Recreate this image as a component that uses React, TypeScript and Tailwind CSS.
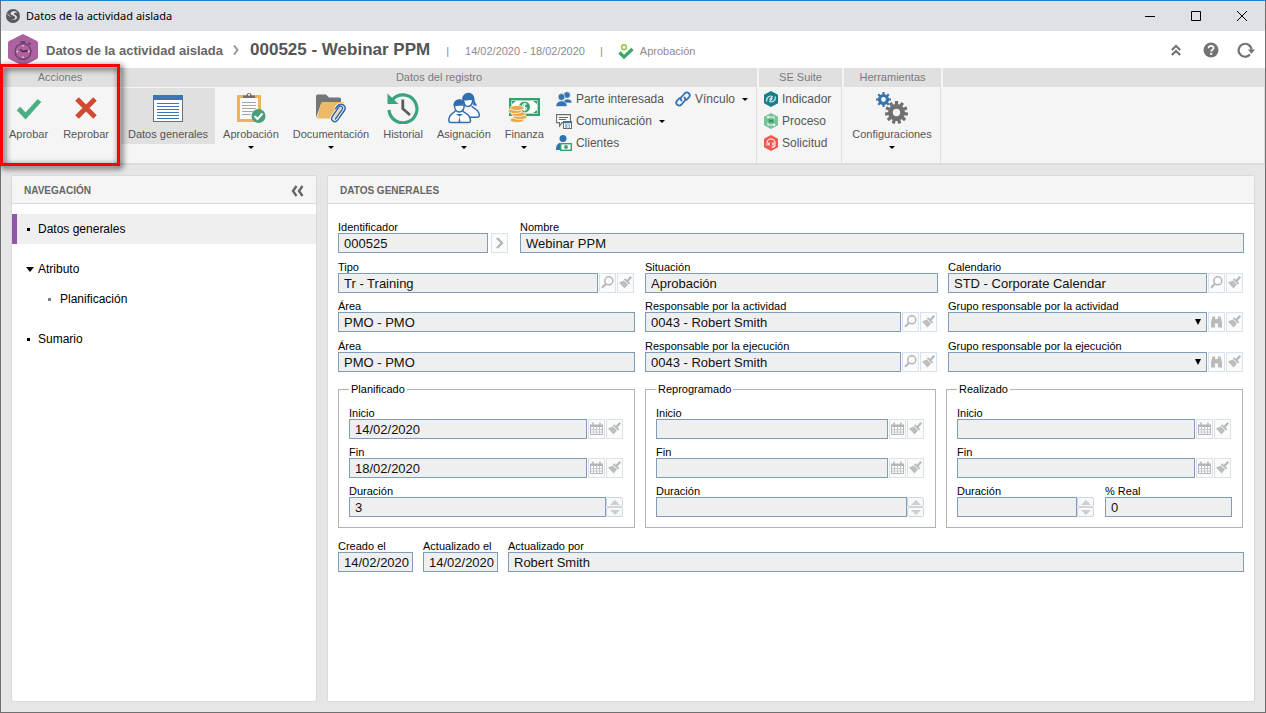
import React from "react";

type IconProps = { className?: string };

/* ---------- window and header icons ---------- */

const AppIcon = () => (
  <svg viewBox="0 0 14 14" className="w-3.5 h-3.5">
    <circle cx="7" cy="7" r="7" fill="#55585c" />
    <path
      d="M11.5 3.2C9.5 1.6 5 2 4.6 4.2c-.4 2.2 4.6 2 4.6 4.2 0 1.6-2 2-3.6 1.6 1.2 1.4 4.6 1 5.4-1.2.6-2.4-3.6-3-3.2-4.2.4-1 2.4-.8 3.7-1.4z"
      fill="#e6e8ea"
    />
    <path d="M1.4 5.2c1.2.2 1.6 1.6 3 2.2" stroke="#e6e8ea" strokeWidth="1" fill="none" />
  </svg>
);

const ActivityLogo = () => (
  <svg viewBox="0 0 30 32" className="w-[30px] h-8">
    <path d="M15 0 L29 7 Q30 7.500 30 9 V23 Q30 24.500 29 25 L15 32 L1 25 Q0 24.500 0 23 V9 Q0 7.500 1 7z" fill="#ab629e" />
    <g fill="none" stroke="#6b3f66" strokeWidth="1.300">
      <circle cx="15" cy="17.500" r="8" />
      <path d="M12.500 7.800h5M15 7.800v2M20.500 8.600l2 2" strokeWidth="1.800" />
    </g>
    <path d="M12 15.500l3 2 4.500-.8" stroke="#3d2440" strokeWidth="1.500" fill="none" />
    <path d="M15 11v1.500M15 22.500V24M8.500 17.500H10M20 17.500h1.500" stroke="#f0dfee" strokeWidth="1.300" />
  </svg>
);

const StatusCheck = () => (
  <svg viewBox="0 0 16 16" className="w-4 h-4">
    <circle cx="6" cy="3.200" r="2.400" fill="none" stroke="#8cc63f" strokeWidth="1.500" />
    <path d="M1.500 8.500l4.500 4.500 8.500-8" fill="none" stroke="#3aa86a" strokeWidth="3.200" />
  </svg>
);

const DoubleUp = () => (
  <svg viewBox="0 0 10 12" className="w-2.5 h-3">
    <path d="M.8 6L5 2l4.200 4M.8 11L5 7l4.200 4" fill="none" stroke="#737373" strokeWidth="2.200" />
  </svg>
);

const HelpIcon = () => (
  <svg viewBox="0 0 16 16" className="w-4 h-4">
    <circle cx="8" cy="8" r="7.500" fill="#737373" />
    <path d="M5.600 6.200c0-3.200 5-3 5-.2 0 1.700-2.400 1.700-2.400 3.400" fill="none" stroke="#fff" strokeWidth="1.800" />
    <rect x="7.200" y="10.800" width="2" height="2" fill="#fff" />
  </svg>
);

const RefreshIcon = () => (
  <svg viewBox="0 0 18 16" className="w-[18px] h-4">
    <path d="M13 12.600A6.500 6.500 0 1 1 14.600 7.500" fill="none" stroke="#737373" strokeWidth="2.200" />
    <path d="M10.800 7.500h7.200l-3.500 4.200z" fill="#737373" />
  </svg>
);

/* ---------- ribbon icons ---------- */

const ApproveIcon = () => (
  <svg viewBox="0 0 32 32" className="w-8 h-8">
    <path d="M5.500 16.500l7 7.500 14-15.500" fill="none" stroke="#4bae84" strokeWidth="4.800" />
  </svg>
);

const RejectIcon = () => (
  <svg viewBox="0 0 32 32" className="w-8 h-8">
    <path d="M7 7l18 18M25 7L7 25" fill="none" stroke="#d04a32" strokeWidth="5" />
  </svg>
);

const GeneralIcon = () => (
  <svg viewBox="0 0 32 32" className="w-8 h-8">
    <rect x="1.500" y="3.500" width="29" height="26" fill="#fff" stroke="#6e6e6e" />
    <rect x="1" y="3" width="30" height="5" fill="#3a76b5" />
    <path d="M5 11.500h22M5 14.500h22M5 17.500h22M5 20.500h22M5 23.500h22M5 26.500h22" stroke="#3a76b5" />
  </svg>
);

const ClipboardIcon = () => (
  <svg viewBox="0 0 32 32" className="w-8 h-8">
    <rect x="3.500" y="4.500" width="21" height="24" fill="#fafafa" stroke="#e8b468" strokeWidth="3" />
    <path d="M8 6V3.500h3.500a2.500 2.500 0 0 1 5 0H20V6z" fill="#6e6e6e" />
    <circle cx="14" cy="2.800" r="1.100" fill="#f5f5f5" />
    <path d="M7 10.500h14M7 13.500h14M7 16.500h14M7 19.500h11M7 22.500h9" stroke="#a6a6a6" />
    <circle cx="23.500" cy="24" r="7" fill="#4a9e7c" />
    <path d="M19.500 24l3 3 5-5.500" stroke="#fff" strokeWidth="2" fill="none" />
  </svg>
);

const FolderIcon = () => (
  <svg viewBox="0 0 32 32" className="w-8 h-8">
    <path d="M1 26V4q0-1.500 1.500-1.500H11l3 3h10.500Q26 5.500 26 7v5H6z" fill="#757575" />
    <path d="M6.500 10H29l-4 16.500H2z" fill="#ecb967" />
    <path
      d="M20 27.500l7.200-10.200a2 2 0 0 0-3.400-2.200L17.300 24.500c-2.400 4 2.700 7 5.300 3.600l6.800-9.600c2.900-4.700-3.700-8.600-6.900-4.500l-2.200 3"
      fill="none"
      stroke="#f5f5f5"
      strokeWidth="3.200"
    />
    <path
      d="M20 27.500l7.200-10.200a2 2 0 0 0-3.400-2.200L17.300 24.500c-2.400 4 2.700 7 5.300 3.600l6.800-9.600c2.900-4.700-3.700-8.600-6.900-4.500l-2.200 3"
      fill="none"
      stroke="#2d63a5"
      strokeWidth="1.400"
    />
  </svg>
);

const HistoryIcon = () => (
  <svg viewBox="0 0 32 32" className="w-8 h-8">
    <path d="M5.500 7.500A14 14 0 1 1 2 18" fill="none" stroke="#3aa57c" strokeWidth="3.200" />
    <path d="M.5 1.500V12h11z" fill="#3aa57c" />
    <path d="M15.800 7.500v9.200L23 23" fill="none" stroke="#5c5c5c" strokeWidth="2.800" />
  </svg>
);

const AssignIcon = () => (
  <svg viewBox="0 0 32 32" className="w-8 h-8">
    <g fill="#fff" stroke="#2f6fb0" strokeWidth="1.500">
      <path d="M15.500 8c0 4 2 6.500 4.500 6.500S24.800 12 24.800 8M24 14c0 3 7 2 7.300 9.500 0 1.800-1.500 1.700-5 1.700h-7" />
      <path d="M.8 28.500C1 20.500 6 22 7.500 18.500h7C16 22 22 20.500 22.500 28.500q0 2-2 2H3q-2 0-2.200-2z" />
      <path d="M6.500 13c0 4 2 7 4.800 7s5-3 5-7z" />
    </g>
    <path d="M14 7.500C14.500-1.500 26.500-1.500 26.500 7.500c0 3 2 4.500 2.500 6-2 .5-3 0-4-1 1-2.500-.5-4.500-2.500-4.500S17 9.500 14 7.500z" fill="#2f6fb0" />
    <path d="M5.500 13.500C5 5 18 5 17.300 13.500 14.500 10.500 9 15 5.500 13.500z" fill="#2f6fb0" />
    <path d="M8 22l3.500 2.500L15 22M11.500 24.500l-1 5.500h2z" fill="#2f6fb0" />
  </svg>
);

const FinanceIcon = () => (
  <svg viewBox="0 0 32 32" className="w-8 h-8">
    <rect x="2.200" y="7.200" width="28.600" height="15.600" fill="#fff" stroke="#33a06f" strokeWidth="2.400" />
    <path d="M4 9h4L4 12zM29 9h-4l4 3zM29 21h-4l4-3z" fill="#33a06f" />
    <circle cx="16.500" cy="15" r="5.500" fill="#33a06f" />
    <path d="M18.500 12.500c-1-1.400-4-1-3.800.9.200 1.700 3.800 1 3.800 3 0 1.800-3 2-4 .5M16.600 10.800v8.400" stroke="#fff" fill="none" strokeWidth="1.100" />
    <g fill="#e9a94b" stroke="#fbf0dc" strokeWidth=".9">
      <ellipse cx="9" cy="28" rx="7" ry="2.500" />
      <ellipse cx="12" cy="25" rx="7" ry="2.500" />
      <ellipse cx="10.500" cy="22" rx="7" ry="2.500" />
      <ellipse cx="7" cy="19" rx="7" ry="2.500" />
      <ellipse cx="9" cy="16" rx="7" ry="2.500" />
    </g>
  </svg>
);

const Gear = ({ cx, cy, r, teeth, color }: { cx: number; cy: number; r: number; teeth: number; color: string }) => (
  <g transform={`translate(${cx} ${cy})`}>
    {Array.from({ length: teeth }, (_, i) => (
      <rect
        key={i}
        x={-r * 0.14}
        y={-r}
        width={r * 0.28}
        height={r * 0.4}
        fill={color}
        transform={`rotate(${(360 / teeth) * i})`}
      />
    ))}
    <circle r={r * 0.53} fill="none" stroke={color} strokeWidth={r * 0.42} />
  </g>
);

const ConfigIcon = () => (
  <svg viewBox="0 0 32 32" className="w-8 h-8">
    <Gear cx={7.500} cy={7.500} r={7.500} teeth={8} color="#3572b0" />
    <Gear cx={20.500} cy={20.500} r={11.500} teeth={11} color="#707070" />
  </svg>
);

const PeopleIcon = () => (
  <svg viewBox="0 0 16 16" className="w-4 h-4">
    <g fill="#3572b0" stroke="#f5f5f5" strokeWidth=".6">
      <circle cx="11" cy="4" r="3.300" />
      <path d="M7 12c0-5 9-5.500 9 0z" />
      <circle cx="5.500" cy="6" r="3.400" />
      <path d="M0 15.500C-.5 8 11.500 8 11 15.500z" />
    </g>
  </svg>
);

const CommentIcon = () => (
  <svg viewBox="0 0 16 16" className="w-4 h-4">
    <path d="M.6 1.600h13.800v8H6L3.500 13V9.600H.6z" fill="#fff" stroke="#6b6b6b" strokeWidth="1.100" />
    <path d="M3 4.500h9M3 6.500h7" stroke="#3572b0" />
    <rect x="7.500" y="8.500" width="8" height="7" fill="#fff" stroke="#6b6b6b" />
    <path d="M8 9.500h7" stroke="#3572b0" strokeWidth="1.500" />
    <path d="M9 12h2.500M12.500 12H14M9 14h2.500M12.500 14H14" stroke="#3572b0" />
  </svg>
);

const ClientsIcon = () => (
  <svg viewBox="0 0 16 16" className="w-4 h-4">
    <circle cx="7" cy="3.500" r="3.500" fill="#3572b0" />
    <path d="M0 15c0-5 2-7 4-7l1.500 0v7z" fill="#3572b0" />
    <rect x="4.700" y="8.700" width="10.600" height="6.600" fill="#fff" stroke="#33a06f" strokeWidth="1.400" />
    <circle cx="10" cy="12" r="1.900" fill="#33a06f" />
  </svg>
);

const LinkIcon = () => (
  <svg viewBox="0 0 16 16" className="w-4 h-4">
    <g fill="none" stroke="#3572b0" strokeWidth="1.800" strokeLinecap="round">
      <path d="M6.500 9.500C5 8 5.500 7 6.500 6l3-3.500c2.800-2.800 7 .8 4.400 3.900l-2.400 2.500" />
      <path d="M9.500 6.500c1.500 1.500 1 2.500 0 3.500l-3 3.500c-2.800 2.800-7-.8-4.400-3.900l2.400-2.500" />
    </g>
  </svg>
);

const Hexagon = ({ color, children }: { color: string; children: React.ReactNode }) => (
  <svg viewBox="0 0 14 16" className="w-3.5 h-4">
    <path d="M7 0l7 3.700v8.600L7 16l-7-3.700V3.700z" fill={color} />
    {children}
  </svg>
);

const IndicatorIcon = () => (
  <Hexagon color="#177f87">
    <path d="M2.800 10.500C1.800 6.500 6 4 8.300 5.500L5.500 8.800M11.200 5.500c1 4-3.200 6.500-5.500 5l2.800-3.300" fill="none" stroke="#cfe8e9" strokeWidth="1.200" />
  </Hexagon>
);

const ProcessIcon = () => (
  <Hexagon color="#74c496">
    <path d="M4 4h6v2.500M4 9.500V12h6" fill="none" stroke="#e9f7ef" strokeWidth="1.100" />
    <path d="M4.500 6.500l5 3M9.500 6.500l-5 3" stroke="#2f8a5a" strokeWidth="1.300" />
    <circle cx="4.200" cy="4.300" r="1.300" fill="#e9f7ef" />
    <circle cx="10" cy="11.800" r="1.300" fill="#e9f7ef" />
  </Hexagon>
);

const RequestIcon = () => (
  <Hexagon color="#f4574f">
    <path d="M3 10.500V8a4 4 0 0 1 8 0v2.500Q10.500 12.500 7.500 12" fill="none" stroke="#fff" strokeWidth="1.100" />
    <path d="M5 7.500v3M9 7.500v3" stroke="#fff" strokeWidth="1.400" />
  </Hexagon>
);

const Caret = ({ className = "" }: IconProps) => (
  <svg viewBox="0 0 6 3" className={`w-1.5 h-[3px] shrink-0 ${className}`}>
    <path d="M0 0h6L3 3z" fill="#000" />
  </svg>
);

/* ---------- field icons ---------- */

const SearchGlyph = () => (
  <svg viewBox="0 0 15 16" className="w-[15px] h-4">
    <circle cx="8.800" cy="5.800" r="4" fill="none" stroke="#b5b5b5" strokeWidth="1.500" />
    <path d="M5.800 9L2 12.800" stroke="#b5b5b5" strokeWidth="2" />
  </svg>
);

const BrushGlyph = () => (
  <svg viewBox="0 0 15 16" className="w-[15px] h-4">
    <path d="M13.200 1.800L9 6.500" stroke="#b9b9b9" strokeWidth="2.400" />
    <path d="M6.500 3.800l5.200 5" stroke="#b9b9b9" strokeWidth="1.800" />
    <path d="M1 7.500l4.800-2L10 9.500l-3.500 4z" fill="#bdbdbd" />
  </svg>
);

const BinocularsGlyph = () => (
  <svg viewBox="0 0 15 16" className="w-[15px] h-4">
    <path d="M3.500 2.500h2.500V5h3V2.500h2.500L13 8v5.500H9V9.500H6v4H2V8z" fill="#bababa" />
  </svg>
);

const CalendarGlyph = () => (
  <svg viewBox="0 0 15 16" className="w-[15px] h-4">
    <path d="M1.500 4.500h12v9h-12z" fill="#fff" stroke="#b5b5b5" />
    <path d="M1 3.500h13v2.500H1z" fill="#b5b5b5" />
    <path d="M4 1.500v3M11 1.500v3" stroke="#b5b5b5" strokeWidth="1.500" />
    <path d="M4.500 6v7.500M7.500 6v7.500M10.500 6v7.500M2 8.500h11M2 11h11" stroke="#c6c6c6" />
  </svg>
);

const ChevronGlyph = () => (
  <svg viewBox="0 0 15 16" className="w-[15px] h-4">
    <path d="M5 3L10 8l-5 5" fill="none" stroke="#b5b5b5" strokeWidth="2.400" />
  </svg>
);

/* ---------- ribbon parts ---------- */

const RibbonGroup = ({
  title,
  className,
  children,
}: {
  title?: string;
  className: string;
  children?: React.ReactNode;
}) => (
  <section className={`relative flex flex-col ${className}`}>
    <h2 className="h-[19px] bg-[#e0e0e0] text-center text-[11px] leading-[19px] text-[#7a7a7a]">{title}</h2>
    <div className="flex flex-1 items-start border-r border-[#dfdfdf] pt-px">{children}</div>
  </section>
);

const RibbonButton = ({
  icon,
  label,
  caret,
  active,
}: {
  icon: React.ReactNode;
  label: string;
  caret?: boolean;
  active?: boolean;
}) => (
  <button
    type="button"
    className={`flex flex-col items-center px-[7px] pt-1 text-[11px] leading-3 text-[#555] ${
      active ? "mr-px h-14 bg-[#e0e0e0]" : ""
    }`}
  >
    {icon}
    <span className="mt-1 whitespace-nowrap">{label}</span>
    {caret && <Caret className="mt-1.5" />}
  </button>
);

const RibbonLink = ({ icon, label, caret }: { icon: React.ReactNode; label: string; caret?: boolean }) => (
  <button type="button" className="flex h-[22px] items-center gap-1 text-[12px] text-[#555]">
    {icon}
    <span className="whitespace-nowrap">{label}</span>
    {caret && <Caret className="ml-[3px]" />}
  </button>
);

/* ---------- form parts ---------- */

const labelClass = "block whitespace-nowrap text-[11px] leading-[11px]";

const inputClass =
  "h-5 min-w-0 flex-1 border border-[#7f9db9] bg-[#efefef] pl-[5px] text-[13px] leading-[18px] text-[#111] outline-none";

const IconButton = ({ title, children }: { title: string; children: React.ReactNode }) => (
  <button
    type="button"
    aria-label={title}
    className="flex h-5 w-[17px] shrink-0 items-center justify-center border border-[#d9e3ed] bg-[#fbfbfb]"
  >
    {children}
  </button>
);

const Spinner = () => (
  <div className="flex h-5 w-[17px] shrink-0 flex-col justify-between">
    <button
      type="button"
      aria-label="Aumentar"
      className="flex h-[10px] items-center justify-center rounded-xs border border-[#c9d6e3] bg-[#f8f8f8]"
    >
      <svg viewBox="0 0 10 5" className="h-[5px] w-2.5">
        <path d="M0 5L5 0l5 5z" fill="#cdcdcd" />
      </svg>
    </button>
    <button
      type="button"
      aria-label="Disminuir"
      className="flex h-[10px] items-center justify-center rounded-xs border border-[#c9d6e3] bg-[#f8f8f8]"
    >
      <svg viewBox="0 0 10 5" className="h-[5px] w-2.5">
        <path d="M0 0h10L5 5z" fill="#cdcdcd" />
      </svg>
    </button>
  </div>
);

type Actions = "search" | "calendar" | "spinner";

const Field = ({
  id,
  label,
  value = "",
  actions,
  className = "",
}: {
  id: string;
  label: string;
  value?: string;
  actions?: Actions;
  className?: string;
}) => (
  <div className={`min-w-0 ${className}`}>
    <label htmlFor={id} className={labelClass}>
      {label}
    </label>
    <div className={`flex ${actions === "spinner" ? "" : "gap-px"} ${actions ? "pr-px" : ""}`}>
      <input id={id} type="text" readOnly defaultValue={value} className={inputClass} />
      {actions === "search" && (
        <>
          <IconButton title="Buscar">
            <SearchGlyph />
          </IconButton>
          <IconButton title="Limpiar">
            <BrushGlyph />
          </IconButton>
        </>
      )}
      {actions === "calendar" && (
        <>
          <IconButton title="Calendario">
            <CalendarGlyph />
          </IconButton>
          <IconButton title="Limpiar">
            <BrushGlyph />
          </IconButton>
        </>
      )}
      {actions === "spinner" && <Spinner />}
    </div>
  </div>
);

const SelectField = ({ id, label }: { id: string; label: string }) => (
  <div className="min-w-0">
    <label htmlFor={id} className={labelClass}>
      {label}
    </label>
    <div className="flex gap-px pr-px">
      <div className="relative flex min-w-0 flex-1">
        <select id={id} className={`${inputClass} appearance-none`}>
          <option></option>
        </select>
        <svg viewBox="0 0 6 6" className="pointer-events-none absolute right-1.5 top-[7px] h-1.5 w-1.5">
          <path d="M0 0h6L3 6z" fill="#000" />
        </svg>
      </div>
      <IconButton title="Buscar">
        <BinocularsGlyph />
      </IconButton>
      <IconButton title="Limpiar">
        <BrushGlyph />
      </IconButton>
    </div>
  </div>
);

const DateBox = ({ title, children }: { title: string; children: React.ReactNode }) => (
  <fieldset className="flex min-w-0 flex-col gap-2 border border-[#b3b3b3] px-2.5 pb-2.5 pt-3">
    <legend className="px-0.5 text-[11px] leading-[13px]">{title}</legend>
    {children}
  </fieldset>
);

const Panel = ({
  title,
  className,
  extra,
  children,
}: {
  title: string;
  className: string;
  extra?: React.ReactNode;
  children: React.ReactNode;
}) => (
  <section className={`flex flex-col rounded-xs border border-[#dadada] bg-white ${className}`}>
    <header className="flex h-7 items-center justify-between border-b border-[#dadada] bg-[#f5f5f5] px-3 pt-0.5">
      <h2 className="text-[10px] font-bold leading-3 text-[#666]">{title}</h2>
      {extra}
    </header>
    {children}
  </section>
);

/* ---------- page sections ---------- */

const TitleBar = () => (
  <div className="flex h-[30px] items-center bg-[#dee1e6] pl-[5px]">
    <AppIcon />
    <span className="ml-1.5 font-['Noto_Sans',sans-serif] text-[11px] text-black">Datos de la actividad aislada</span>
    <div className="ml-auto flex h-full">
      <button type="button" aria-label="Minimizar" className="flex w-[46px] items-center justify-center">
        <svg viewBox="0 0 10 10" className="h-2.5 w-2.5">
          <path d="M0 5.500h10" stroke="#000" />
        </svg>
      </button>
      <button type="button" aria-label="Maximizar" className="flex w-[46px] items-center justify-center">
        <svg viewBox="0 0 10 10" className="h-2.5 w-2.5">
          <path d="M.5.5h9v9h-9z" stroke="#000" fill="none" />
        </svg>
      </button>
      <button type="button" aria-label="Cerrar" className="flex w-[46px] items-center justify-center">
        <svg viewBox="0 0 10 10" className="h-2.5 w-2.5">
          <path d="M0 0l10 10M10 0L0 10" stroke="#000" fill="none" />
        </svg>
      </button>
    </div>
  </div>
);

const Header = () => (
  <header className="flex h-[37px] items-center whitespace-nowrap bg-white pl-[7px] pr-0.5">
    <ActivityLogo />
    <span className="ml-2 pt-0.5 text-[13px] font-bold text-[#666]">Datos de la actividad aislada</span>
    <svg viewBox="0 0 6 10" className="ml-2.5 h-2.5 w-1.5">
      <path d="M1 .5L4.500 5 1 9.500" fill="none" stroke="#999" strokeWidth="2" />
    </svg>
    <h1 className="ml-[11px] text-[17px] font-bold text-[#555]">000525 - Webinar PPM</h1>
    <div className="flex items-center pt-1 text-[11px] text-[#8c8c8c]">
      <span className="ml-4">|</span>
      <span className="ml-4">14/02/2020 - 18/02/2020</span>
      <span className="mx-[15px]">|</span>
      <StatusCheck />
      <span className="ml-1.5">Aprobación</span>
    </div>
    <div className="ml-auto flex h-full">
      <button type="button" aria-label="Contraer" className="flex w-[35px] items-center justify-center">
        <DoubleUp />
      </button>
      <button type="button" aria-label="Ayuda" className="flex w-[35px] items-center justify-center">
        <HelpIcon />
      </button>
      <button type="button" aria-label="Actualizar" className="flex w-[35px] items-center justify-center">
        <RefreshIcon />
      </button>
    </div>
  </header>
);

const Ribbon = () => (
  <div className="flex h-[97px] gap-0.5 border-b-2 border-[#dcdcdc] bg-[#f5f5f5]">
    <RibbonGroup title="Acciones" className="w-[118px] shrink-0">
      <div className="flex gap-px pl-px">
        <RibbonButton icon={<ApproveIcon />} label="Aprobar" />
        <RibbonButton icon={<RejectIcon />} label="Reprobar" />
      </div>
      {/* highlight frame around the approval actions */}
      <div
        aria-hidden="true"
        className="pointer-events-none absolute -bottom-[3px] -left-px -right-px -top-1 z-10 border-3 border-[#fe0000] [filter:drop-shadow(2px_2px_3px_rgba(0,0,0,0.9))]"
      />
    </RibbonGroup>
    <RibbonGroup title="Datos del registro" className="w-[636px] shrink-0">
      <RibbonButton icon={<GeneralIcon />} label="Datos generales" active />
      <RibbonButton icon={<ClipboardIcon />} label="Aprobación" caret />
      <RibbonButton icon={<FolderIcon />} label="Documentación" caret />
      <RibbonButton icon={<HistoryIcon />} label="Historial" />
      <RibbonButton icon={<AssignIcon />} label="Asignación" caret />
      <RibbonButton icon={<FinanceIcon />} label="Finanza" caret />
      <div className="ml-[5px] flex flex-col items-start">
        <RibbonLink icon={<PeopleIcon />} label="Parte interesada" />
        <RibbonLink icon={<CommentIcon />} label="Comunicación" caret />
        <RibbonLink icon={<ClientsIcon />} label="Clientes" />
      </div>
      <div className="ml-2.5">
        <RibbonLink icon={<LinkIcon />} label="Vínculo" caret />
      </div>
    </RibbonGroup>
    <RibbonGroup title="SE Suite" className="w-[83px] shrink-0">
      <div className="ml-[5px] flex flex-col items-start">
        <RibbonLink icon={<IndicatorIcon />} label="Indicador" />
        <RibbonLink icon={<ProcessIcon />} label="Proceso" />
        <RibbonLink icon={<RequestIcon />} label="Solicitud" />
      </div>
    </RibbonGroup>
    <RibbonGroup title="Herramientas" className="w-[97px] shrink-0">
      <div className="flex flex-1 justify-center">
        <RibbonButton icon={<ConfigIcon />} label="Configuraciones" caret />
      </div>
    </RibbonGroup>
    <RibbonGroup className="flex-1" />
  </div>
);

const Navigation = () => (
  <Panel
    title="NAVEGACIÓN"
    className="w-[306px] shrink-0"
    extra={
      <button type="button" aria-label="Ocultar navegación">
        <svg viewBox="0 0 13 12" className="h-3 w-[13px]">
          <path d="M5.500 1L2 6l3.500 5M11.500 1L8 6l3.500 5" fill="none" stroke="#666" strokeWidth="2.400" />
        </svg>
      </button>
    }
  >
    <nav className="pt-2.5 text-[12px] text-black">
      <ul className="flex flex-col gap-2.5">
        <li>
          <a href="#datos" className="flex h-[30px] items-center border-l-[5px] border-[#9157a9] bg-[#efefef] pl-2.5">
            <span className="mr-2 h-[3px] w-[3px] bg-black" />
            Datos generales
          </a>
        </li>
        <li>
          <a href="#atributo" className="flex h-[30px] items-center pl-3.5">
            <svg viewBox="0 0 8 5" className="mr-1 h-[5px] w-2">
              <path d="M0 0h8L4 5z" fill="#000" />
            </svg>
            Atributo
          </a>
          <ul>
            <li>
              <a href="#planificacion" className="flex h-[30px] items-center pl-9">
                <span className="mr-[9px] h-[3px] w-[3px] bg-[#808080]" />
                Planificación
              </a>
            </li>
          </ul>
        </li>
        <li>
          <a href="#sumario" className="flex h-[30px] items-center pl-[15px]">
            <span className="mr-2 h-[3px] w-[3px] bg-black" />
            Sumario
          </a>
        </li>
      </ul>
    </nav>
  </Panel>
);

const GeneralData = () => (
  <Panel title="DATOS GENERALES" className="min-w-0 flex-1">
    <form className="px-2.5 pb-2.5 pt-[18px] text-black">
      <div className="mb-[9px] flex items-end">
        <Field id="identificador" label="Identificador" value="000525" className="w-[150px]" />
        <div className="ml-[3px] mr-3">
          <IconButton title="Siguiente">
            <ChevronGlyph />
          </IconButton>
        </div>
        <Field id="nombre" label="Nombre" value="Webinar PPM" className="flex-1" />
      </div>

      <div className="mb-2 grid grid-cols-[297fr_293fr_296fr] gap-x-2.5">
        <Field id="tipo" label="Tipo" value="Tr - Training" actions="search" />
        <Field id="situacion" label="Situación" value="Aprobación" />
        <Field id="calendario" label="Calendario" value="STD - Corporate Calendar" actions="search" />
      </div>

      <div className="grid grid-cols-[297fr_293fr_296fr] gap-x-2.5 gap-y-[9px]">
        <Field id="area-actividad" label="Área" value="PMO - PMO" />
        <Field id="resp-actividad" label="Responsable por la actividad" value="0043 - Robert Smith" actions="search" />
        <SelectField id="grupo-actividad" label="Grupo responsable por la actividad" />
        <Field id="area-ejecucion" label="Área" value="PMO - PMO" />
        <Field id="resp-ejecucion" label="Responsable por la ejecución" value="0043 - Robert Smith" actions="search" />
        <SelectField id="grupo-ejecucion" label="Grupo responsable por la ejecución" />
      </div>

      <div className="mt-[11px] grid grid-cols-[297fr_291fr_297fr] gap-x-2.5 pr-px">
        <DateBox title="Planificado">
          <Field id="plan-inicio" label="Inicio" value="14/02/2020" actions="calendar" />
          <Field id="plan-fin" label="Fin" value="18/02/2020" actions="calendar" />
          <Field id="plan-duracion" label="Duración" value="3" actions="spinner" />
        </DateBox>
        <DateBox title="Reprogramado">
          <Field id="rep-inicio" label="Inicio" actions="calendar" />
          <Field id="rep-fin" label="Fin" actions="calendar" />
          <Field id="rep-duracion" label="Duración" actions="spinner" />
        </DateBox>
        <DateBox title="Realizado">
          <Field id="real-inicio" label="Inicio" actions="calendar" />
          <Field id="real-fin" label="Fin" actions="calendar" />
          <div className="grid grid-cols-[138fr_127fr] gap-x-2.5">
            <Field id="real-duracion" label="Duración" actions="spinner" />
            <Field id="real-porcentaje" label="% Real" value="0" />
          </div>
        </DateBox>
      </div>

      <div className="mt-[13px] flex gap-2.5">
        <Field id="creado" label="Creado el" value="14/02/2020" className="w-[75px]" />
        <Field id="actualizado" label="Actualizado el" value="14/02/2020" className="w-[75px]" />
        <Field id="actualizado-por" label="Actualizado por" value="Robert Smith" className="flex-1" />
      </div>
    </form>
  </Panel>
);

const App = () => {
  return (
    <div className="flex min-h-screen flex-col border border-[#707070] border-t-[#1883d7] bg-[#e6e6e6] font-['Liberation_Sans',Arial,sans-serif]">
      <TitleBar />
      <Header />
      <Ribbon />
      <main className="flex flex-1 gap-2.5 p-2.5">
        <Navigation />
        <GeneralData />
      </main>
    </div>
  );
};

export default App;
